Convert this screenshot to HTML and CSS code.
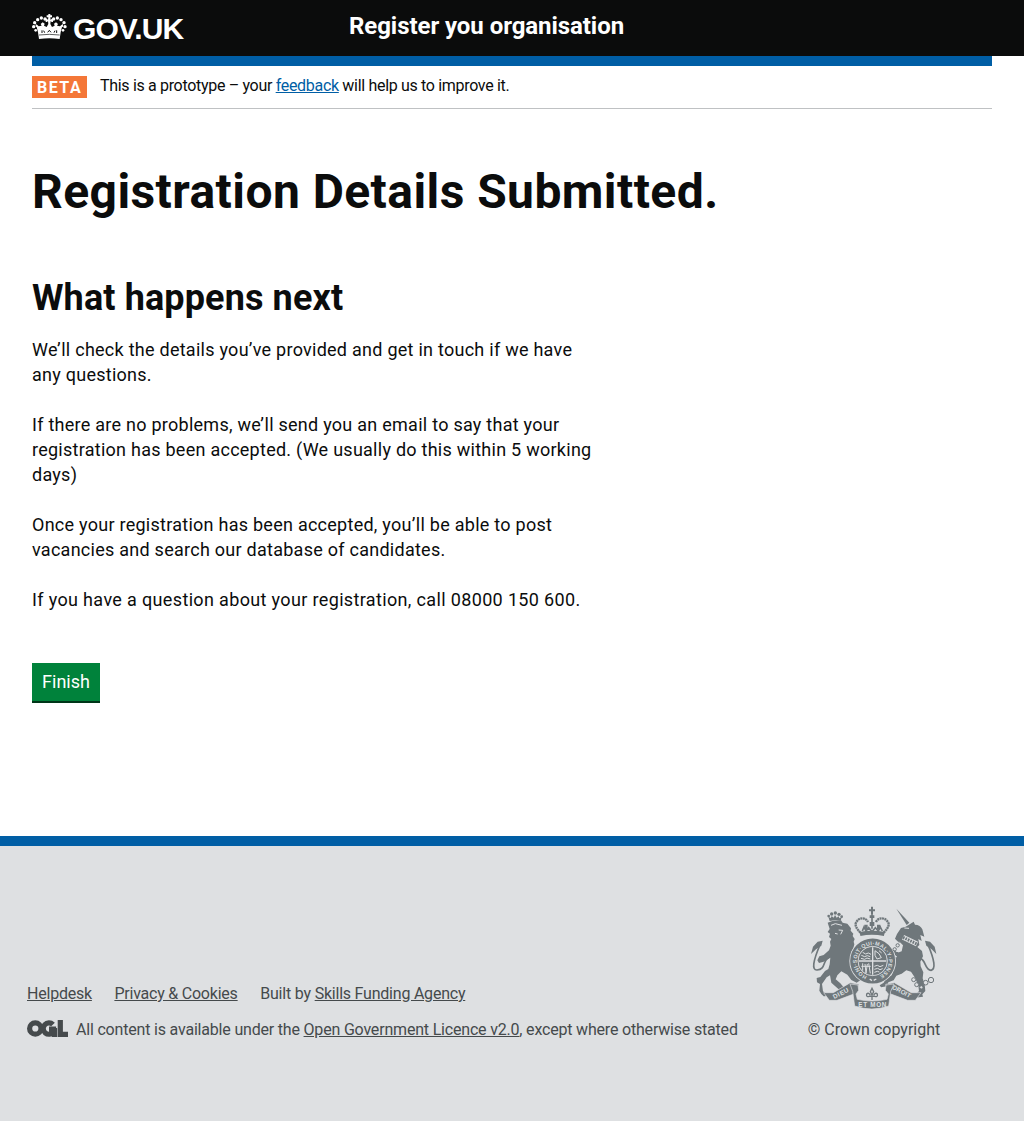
FILE: index.html
```html
<!DOCTYPE html>
<html lang="en">
<head>
<meta charset="utf-8">
<title>Registration Details Submitted</title>
<link rel="stylesheet" href="styles.css">
</head>
<body>
<header class="site-header">
  <a class="brand">
    <svg class="crown" viewBox="36 42 105 78" aria-hidden="true">
      <g fill="#fff">
        <path d="M85 42h6v4h5v6h-5l1 8 3-4h4v10h-4l-3-3-1 9 5 9 8-4-2-6 6-4 6 5-3 5 9 2 4-4 5-3v8l-3 1-4 16-3 20q-31-4-62 0l-3-20-4-16-3-1v-8l5 3 4 4 9-2-3-5 6-5 6 4-2 6 8 4 5-9-1-9-3 3h-4V56h4l3 4 1-8h-5v-6h5z"/>
        <circle cx="75" cy="57" r="5"/><circle cx="64" cy="54" r="5"/><circle cx="53" cy="59" r="5"/><circle cx="44" cy="68" r="5"/><circle cx="41" cy="80" r="5"/><circle cx="47" cy="91" r="4"/>
        <circle cx="101" cy="57" r="5"/><circle cx="112" cy="54" r="5"/><circle cx="123" cy="59" r="5"/><circle cx="132" cy="68" r="5"/><circle cx="135" cy="80" r="5"/><circle cx="129" cy="91" r="4"/>
      </g>
      <path d="M57 105q31-4 62 0" fill="none" stroke="#0b0c0c" stroke-width="2"/>
      <path d="M66 99v-8M74 98l-3-6M83 97l5-6 5 6M102 98l3-6M110 99v-8" fill="none" stroke="#0b0c0c" stroke-width="3"/>
    </svg>
    <span class="brand-name">GOV.UK</span>
  </a>
  <span class="service-name">Register you organisation</span>
</header>
<div class="page">
  <div class="phase">
    <strong class="phase-tag">BETA</strong>
    <span class="phase-text">This is a prototype – your <a href="#">feedback</a> will help us to improve it.</span>
  </div>
  <main>
    <h1>Registration Details Submitted.</h1>
    <h2>What happens next</h2>
    <div class="copy">
      <p>We’ll check the details you’ve provided and get in touch if we have any questions.</p>
      <p>If there are no problems, we’ll send you an email to say that your registration has been accepted. (We usually do this within 5 working days)</p>
      <p>Once your registration has been accepted, you’ll be able to post vacancies and search our database of candidates.</p>
      <p class="contact">If you have a question about your registration, call 08000 150 600.</p>
    </div>
    <button class="button">Finish</button>
  </main>
</div>
<footer class="site-footer">
  <div class="footer-inner">
    <div class="footer-meta">
      <nav class="footer-links"><a href="#">Helpdesk</a><a href="#">Privacy &amp; Cookies</a><span>Built by <a href="#">Skills Funding Agency</a></span></nav>
      <div class="licence">
        <svg class="ogl" viewBox="0 0 41 17" aria-label="OGL"><circle cx="8.3" cy="8.5" r="5.7"/><path d="M26 4.5a5.7 5.7 0 1 0 .5 7.5V9H22M27.6 8v9"/><path d="M33.3 0v14.4H41"/></svg>
        <span>All content is available under the <a href="#">Open Government Licence v2.0</a>, except where otherwise stated</span>
      </div>
    </div>
    <a class="copyright">
      <svg class="arms" viewBox="36 18 378 312" aria-hidden="true">
        <defs>
          <path id="garter" d="M204 228A48 48 0 1 1 238 228"/>
          <path id="motto-left" d="M106 297L155 272"/>
          <path id="motto-right" d="M278 266L335 296"/>
        </defs>
        <g class="solid">
          <path d="M86 68l14-5 26-2 5 7 14 3 11 14-1 7 8 9-2 7 6 9-3 8 2 8-3 12-6 11q-3 16 2 36l6 18 8 14 12 16-12 8-16-8-12-16-18-10-12 12-5 12 14 12 10 12 15 3 8 8-3 5-32 0-3-10-22-20-4-22-10 6-14 20 3 22 10 9-3 6H74l-7-7-6-10 2-20-9-5-1-13 11-3 14-18 10-6 4-14 2-20-20 12-14 4-5-8 6-12 13-4 16-14 5-14-2-12 4-8-7-6 3-10-7-5 6-9z"/>
          <circle cx="89" cy="48" r="4"/><circle cx="98" cy="42" r="5"/><circle cx="109" cy="39" r="5"/><circle cx="120" cy="43" r="5"/><circle cx="128" cy="50" r="4"/>
          <path d="M92 63l-4-13 7 4 3-6 6 5 4-8 5 8 6-4 2 6 7-3-3 10q-16-3-33 1z"/>
          <path d="M36 162l6-22 14-15 15-3-4 15-16 11z"/>
          <path d="M412 162l-5-22-14-15-15-3 4 15 16 11z"/>
          <path d="M292 26l39 42-8 7z"/>
          <path d="M344 65l4 9q16 0 22 14l6 22-12-5 4 18-10-6 3 18-6 6 14 12 3 16-8 16 1 14 8 18-2 18 6 18 2 20-9 10 2 7-24 3 4-12 8-8-2-16-10-24-12-18-14-4-14 10-16 6-8 14-16 6-4 12-18 3-4-6 12-8 8-14 16-8 4-12-12-12 4-16-12-16-8 8-10-3 2-9 14-8 10 3 12 10 12 1-4-12-10 4-12-10 10-6 10 4 8 6 12-4 4-18-12-12-6-2-6-6 6-14 12-18 14-4z"/>
        </g>
        <g class="line">
          <path stroke-width="5" d="M64 132Q30 211 54 210C82 208 69 182 91 171M386 132Q418 206 396 211C377 210 381 181 365 176"/>
          <path stroke-width="7" stroke-dasharray="6 1.5" d="M184 98Q163 76 173 65C181 51 200 52 207 66M254 98Q276 76 266 65C257 51 237 52 231 66"/>
          <path stroke-width="6" d="M219 20v22M210 31h18"/>
          <path stroke-width="5" d="M219 42v44"/>
          <path stroke-width="12" d="M183 102q35-8 73 0"/>
          <path stroke-width="5" d="M190 93l5-12 6 12 8-10 10 12 10-12 9 10 6-12 6 12"/>
        </g>
        <circle class="ground" cx="221" cy="183" r="70"/>
        <circle class="line" cx="221" cy="183" r="56" stroke-width="23"/>
        <circle class="solid" cx="221" cy="183" r="43"/>
        <circle class="cut" cx="221" cy="183" r="44" stroke-width="2"/>
        <path class="solid" d="M212 46h14v8h-14zM196 74h10v14h-10zM234 74h10v14h-10zM212 66h14v12h-14z"/>
        <path d="M221 142v82M180 183h82" stroke="#dee0e2" stroke-width="4"/>
        <g class="cut" stroke-width="3">
          <path d="M191 157l9 5 8-3 8 4M187 166l10 4 8-3 9 3M186 175l11 3 7-4 10 3M226 199l9-3 8 4 10-4M226 208l10-3 7 4 8-3M226 217l9-3 6 2M228 152l12 9 7 12-13 4-6-11zM240 152l8 7"/>
          <path d="M191 190v22M198 192l3 28 4-28M209 190l5 30M187 199h28"/>
          <path d="M212 237l7 5M224 241l8-4" stroke-width="4"/>
          <path d="M96 76l13-5 20 5M119 90l12 1-6 12M108 100l8 2M316 84l14 1"/>
        </g>
        <text class="garter-text"><textPath href="#garter" textLength="262">HONI·SOIT·QUI·MAL·Y·PENSE</textPath></text>
        <path d="M312 112l42 20" stroke="#dee0e2" stroke-width="15"/>
        <path d="M312 112l42 20" stroke="#6f777b" stroke-width="9" stroke-dasharray="5 3"/>
        <g class="line" stroke-width="3"><circle cx="301" cy="121" r="5"/><circle cx="296" cy="136" r="5"/><circle cx="287" cy="148" r="5"/><circle cx="294" cy="162" r="5"/></g>
        <g stroke="#6f777b" fill="#dee0e2" stroke-width="3"><circle cx="344" cy="239" r="6"/><circle cx="353" cy="254" r="6"/><circle cx="380" cy="248" r="7"/><circle cx="396" cy="240" r="8"/><circle cx="367" cy="262" r="5"/></g>
        <g class="solid" stroke="#dee0e2" stroke-width="2">
          <path d="M74 278l29 0 51-30 26 5-10 27-56 21-23 0zM366 278l-29 0-51-30-26 5 10 27 56 21 23 0z"/>
          <path d="M153 252l24 3 2 16-8 11 4 16q44 10 89 0l4-16-9-11 2-16 24-3-10 22-6 44q-50 18-102 0l-6-44z"/>
        </g>
        <g class="motto"><text><textPath href="#motto-left" textLength="50">DIEU</textPath></text><text x="178" y="321" textLength="84">ET MON</text><text><textPath href="#motto-right" textLength="60">DROIT</textPath></text></g>
        <path class="line" stroke-width="4" d="M219 265l-5 10 5 10 5-10zM219 284v16M209 289h20M216 288q-16 6-13-6 6-6 11 4M222 288q16 6 13-6-6-6-11 4"/>
      </svg>
      <span>© Crown copyright</span>
    </a>
  </div>
</footer>
</body>
</html>
```
FILE: styles.css
```css
* { box-sizing: border-box; }
body { margin: 0; color: #0b0c0c; background: #fff; font: 16px/20px Roboto, sans-serif; }
.site-header { display: grid; grid-template-columns: 317px 1fr; height: 56px; padding: 0 32px; background: #0b0c0c; color: #fff; }
.brand { display: flex; gap: 6px; padding-top: 14px; }
.crown { width: 35px; height: 26px; }
.brand-name { font: bold 30px/29px "Liberation Sans", Arial, sans-serif; letter-spacing: -0.9px; }
.service-name { font-size: 24px; font-weight: 700; line-height: 30px; letter-spacing: -0.06px; padding-top: 11px; white-space: nowrap; justify-self: start; }
.page { width: 960px; height: 780px; margin: 0 auto; border-top: 10px solid #005ea5; }
.phase { display: flex; gap: 13px; height: 43px; padding-top: 10px; border-bottom: 1px solid #bfc1c3; }
.phase-tag { width: 55px; height: 22px; padding-left: 5px; background: #f47738; color: #fff; font-size: 16px; line-height: 23px; letter-spacing: 1.5px; }
.phase-text { letter-spacing: -0.3px; word-spacing: -0.1px; }
.phase a { color: #005ea5; }
h1 { margin: 58px 0 0; font-size: 48px; line-height: 50px; letter-spacing: 0.43px; }
h2 { margin: 61px 0 0; font-size: 36px; line-height: 40px; letter-spacing: 0.12px; }
.copy { margin-top: 19px; width: 565px; font-size: 18px; line-height: 25px; letter-spacing: 0.26px; }
.copy p { margin: 0 0 25px; }
.copy .contact { letter-spacing: 0.35px; }
.button { display: block; width: 68px; height: 40px; margin-top: 51px; padding: 0 10px; border: 0; border-bottom: 2px solid #003618; background: #00823b; color: #fff; font: 18px/38px Roboto, sans-serif; }
.site-footer { height: 285px; border-top: 10px solid #005ea5; background: #dee0e2; color: #454a4c; }
.site-footer a { color: inherit; }
.footer-inner { display: flex; justify-content: space-between; padding: 60px 83px 0 27px; }
.footer-meta { padding-top: 78px; white-space: nowrap; letter-spacing: -0.19px; }
.footer-links { display: flex; gap: 22.5px; margin-bottom: 16px; }
.footer-links a { letter-spacing: -0.22px; }
.licence { display: flex; gap: 8px; }
.ogl { width: 41px; height: 17px; fill: none; stroke: #454a4c; stroke-width: 5.2; }
.copyright { display: flex; flex-direction: column; align-items: center; width: 134px; white-space: nowrap; }
.arms { width: 126px; height: 104px; margin-bottom: 10px; }
.solid { fill: #6f777b; }
.ground { fill: #dee0e2; }
.line { fill: none; stroke: #6f777b; }
.cut { fill: none; stroke: #dee0e2; }
.garter-text { font: bold 16px "Liberation Sans", sans-serif; fill: #dee0e2; }
.motto { font: bold 19px "Liberation Sans", sans-serif; fill: #dee0e2; }
```
